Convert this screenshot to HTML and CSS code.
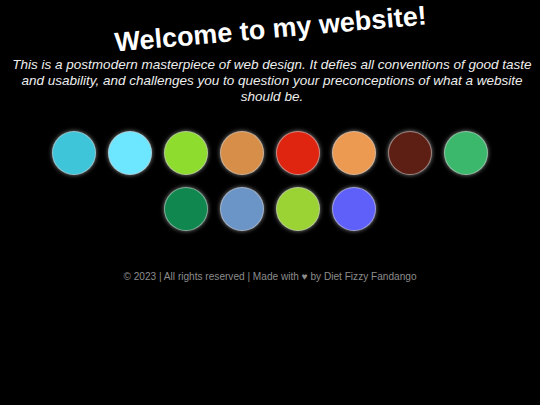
FILE: index.html
```html
<!DOCTYPE html>
<html>
<head>
<meta charset="utf-8">
<link rel="stylesheet" href="styles.css">
</head>
<body>
<h1 class="title">Welcome to my website!</h1>
<p class="intro">This is a postmodern masterpiece of web design. It defies all conventions of good taste and usability, and challenges you to question your preconceptions of what a website should be.</p>
<div class="dots">
  <span class="dot" style="background:#3ec5da"></span>
  <span class="dot" style="background:#6de6ff"></span>
  <span class="dot" style="background:#8edc2e"></span>
  <span class="dot" style="background:#d68e48"></span>
  <span class="dot" style="background:#df2410"></span>
  <span class="dot" style="background:#ec9a52"></span>
  <span class="dot" style="background:#5d1f14"></span>
  <span class="dot" style="background:#3bb86c"></span>
  <span class="dot" style="background:#0f874e"></span>
  <span class="dot" style="background:#6b94c7"></span>
  <span class="dot" style="background:#9ad333"></span>
  <span class="dot" style="background:#5f5ff9"></span>
</div>
<footer class="footer">© 2023 | All rights reserved | Made with ♥ by Diet Fizzy Fandango</footer>
</body>
</html>
```
FILE: styles.css
```css
html, body {
  margin: 0;
  background: #000;
  color: #fff;
  font-family: "Liberation Sans", Arial, sans-serif;
}
body {
  padding: 0 4px;
}
.title {
  margin: 0;
  padding-top: 13px;
  text-align: center;
  font-size: 27px;
  font-weight: bold;
  transform: rotate(-5deg);
  line-height: 32px;
}
.intro {
  margin: 12px 0 0;
  padding: 0 0 0 4px;
  text-align: center;
  font-style: italic;
  font-size: 13.5px;
  line-height: 16px;
  color: #eee;
}
.dots {
  display: flex;
  flex-wrap: wrap;
  justify-content: center;
  gap: 12px;
  width: 436px;
  margin: 26px auto 0;
}
.dot {
  width: 44px;
  height: 44px;
  box-sizing: border-box;
  border-radius: 50%;
  border: 1px solid rgba(200,200,200,0.6);
  box-shadow: 0 0 4px rgba(255,255,255,0.5);
}
.footer {
  margin-top: 40px;
  text-align: center;
  font-size: 10.1px;
  color: #8c8c8c;
}
```
